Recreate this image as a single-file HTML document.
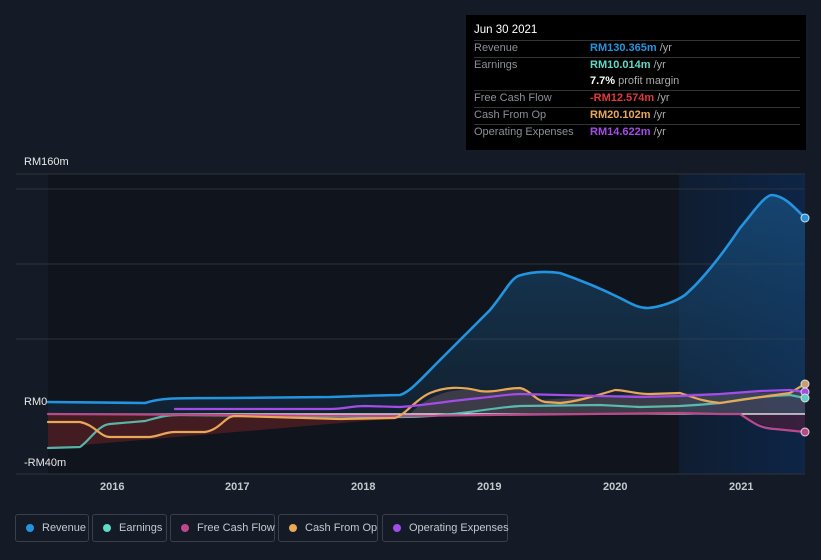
<!DOCTYPE html>
<html><head><style>
body{margin:0;background:#151b26;width:821px;height:560px;overflow:hidden;font-family:"Liberation Sans",sans-serif;position:relative}
.tt{position:absolute;left:466px;top:15px;width:340px;height:135px;background:#000;font-size:11px;color:#8a8f98}
.tt .r{position:absolute;left:8px;width:326px;border-top:1px solid #333}
.tt span{position:absolute;white-space:nowrap}
.leg{position:absolute;top:514px;height:28px;border:1px solid #3a3f4a;border-radius:3px;font-size:11px;color:#c5c8cd;box-sizing:border-box;line-height:26px;white-space:nowrap}
.leg i{position:absolute;left:10px;top:9px;width:8px;height:8px;border-radius:50%}
.leg span{position:absolute;left:26px}
.lbl{position:absolute;color:#e8e8e8;font-size:11px}
.yr{position:absolute;top:481px;color:#c5c8cd;font-size:11px;font-weight:bold}
</style></head><body>
<svg width="821" height="560" style="position:absolute;left:0;top:0">
<defs>
<linearGradient id="fut" x1="0" x2="1"><stop offset="0" stop-color="#0f1d30"/><stop offset="1" stop-color="#0e2547"/></linearGradient>
<linearGradient id="rev" x1="0" y1="0" x2="0" y2="1"><stop offset="0" stop-color="#1a5a8e" stop-opacity=".6"/><stop offset="1" stop-color="#1a4a70" stop-opacity=".25"/></linearGradient>
</defs>
<rect x="48" y="174" width="631" height="300" fill="#10141c"/>
<rect x="679" y="174" width="126" height="300" fill="url(#fut)"/>
<g stroke="#2e333d" stroke-width="1">
<line x1="16" y1="174" x2="805" y2="174"/><line x1="16" y1="189" x2="805" y2="189"/>
<line x1="16" y1="264" x2="805" y2="264"/><line x1="16" y1="339" x2="805" y2="339"/>
<line x1="16" y1="474" x2="805" y2="474"/></g>
<path d="M48,402 L145,403 C160,398 170,398 230,398 L330,397 C360,396 390,395 400,395 C410,392 420,380 440,360 C460,340 475,325 490,310 C505,292 510,280 518,276 C530,272 545,271 560,273 C580,280 600,288 620,298 C635,306 640,308 648,308 C660,307 675,302 685,295 C700,282 720,258 740,228 C755,210 765,195 772,195 C785,196 795,208 805,218 L805,414 L48,414 Z" fill="url(#rev)"/>
<path d="M48,414 L400,414 L400,418 L48,448 Z" fill="#6b2226" opacity=".55"/>
<path d="M410,414 C430,393 455,387 480,391 L520,388 L540,400 L600,396 L640,394 L805,392 L805,414 Z" fill="#8a6a70" opacity=".35"/>
<path d="M680,414 L740,414 C760,425 770,428 805,432 L805,414 Z" fill="#4a1e3a" opacity=".7"/>
<line x1="48" y1="414" x2="805" y2="414" stroke="#fff" stroke-width="1.2"/>
<g fill="none" stroke-width="2.2" stroke-linecap="round">
<path d="M48,448 L80,447 C90,440 98,425 110,424 L145,421 C160,417 165,415 180,415 L400,417 C420,417 440,416 470,412 C490,409 505,407 520,406 L600,405 L640,407 L680,406 C700,405 710,404 720,403 C740,400 760,396 790,395 L805,398" stroke="#5fcfc1" opacity=".85"/>
<path d="M48,414 L400,416 L680,413 L720,414 L740,414 C755,424 760,428 775,429 L805,432" stroke="#b84a8a"/>
<path d="M48,422 L80,422 C95,425 100,437 110,437 L150,437 C160,436 165,432 175,432 L205,432 C220,430 225,416 235,416 L340,419 L395,418 C405,415 415,400 430,393 C445,387 460,386 480,391 C495,393 505,388 520,388 C530,390 535,400 545,402 L560,403 C575,402 595,396 615,390 C625,390 635,394 650,394 L680,393 C690,396 700,401 720,403 C740,400 760,397 790,393 L805,384" stroke="#e8a857"/>
<path d="M175,409 L330,409 C345,409 350,406 365,406 L400,407 C420,406 440,402 480,398 C500,396 510,394 520,394 L600,396 L640,397 L680,396 L720,394 L760,391 L790,390 L805,392" stroke="#a44ce8"/>
<path d="M48,402 L145,403 C160,398 170,398 230,398 L330,397 C360,396 390,395 400,395 C410,392 420,380 440,360 C460,340 475,325 490,310 C505,292 510,280 518,276 C530,272 545,271 560,273 C580,280 600,288 620,298 C635,306 640,308 648,308 C660,307 675,302 685,295 C700,282 720,258 740,228 C755,210 765,195 772,195 C785,196 795,208 805,218" stroke="#2394df" stroke-width="2.6"/>
</g>
<g stroke="#ddd" stroke-width="1">
<circle cx="805" cy="218" r="4" fill="#2394df"/><circle cx="805" cy="384" r="4" fill="#c8a070"/>
<circle cx="805" cy="392" r="4" fill="#a44ce8"/><circle cx="805" cy="398" r="4" fill="#5fcfc1"/>
<circle cx="805" cy="432" r="4" fill="#b84a8a"/></g>
</svg>
<div class="lbl" style="left:24px;top:156px">RM160m</div>
<div class="lbl" style="left:24px;top:396px">RM0</div>
<div class="lbl" style="left:24px;top:457px">-RM40m</div>
<div class="yr" style="left:100px">2016</div><div class="yr" style="left:225px">2017</div>
<div class="yr" style="left:351px">2018</div><div class="yr" style="left:477px">2019</div>
<div class="yr" style="left:603px">2020</div><div class="yr" style="left:729px">2021</div>
<div class="tt">
<span style="left:8px;top:9px;color:#fff;font-size:11.5px">Jun 30 2021</span>
<div class="r" style="top:25px"></div>
<span style="left:8px;top:27px">Revenue</span><span style="left:124px;top:27px;color:#2394df;font-weight:bold">RM130.365m <b style="color:#aaa;font-weight:normal">/yr</b></span>
<div class="r" style="top:42px"></div>
<span style="left:8px;top:44px">Earnings</span><span style="left:124px;top:44px;color:#5fd9c8;font-weight:bold">RM10.014m <b style="color:#aaa;font-weight:normal">/yr</b></span>
<span style="left:124px;top:60px;color:#fff;font-weight:bold">7.7% <b style="color:#aaa;font-weight:normal">profit margin</b></span>
<div class="r" style="top:75px"></div>
<span style="left:8px;top:77px">Free Cash Flow</span><span style="left:124px;top:77px;color:#e0393e;font-weight:bold">-RM12.574m <b style="color:#aaa;font-weight:normal">/yr</b></span>
<div class="r" style="top:92px"></div>
<span style="left:8px;top:94px">Cash From Op</span><span style="left:124px;top:94px;color:#e8a857;font-weight:bold">RM20.102m <b style="color:#aaa;font-weight:normal">/yr</b></span>
<div class="r" style="top:109px"></div>
<span style="left:8px;top:111px">Operating Expenses</span><span style="left:124px;top:111px;color:#a44ce8;font-weight:bold">RM14.622m <b style="color:#aaa;font-weight:normal">/yr</b></span>
</div>
<div class="leg" style="left:15px;width:74px"><i style="background:#2394df"></i><span>Revenue</span></div>
<div class="leg" style="left:92px;width:75px"><i style="background:#5fd9c8"></i><span>Earnings</span></div>
<div class="leg" style="left:170px;width:105px"><i style="background:#c0488a"></i><span>Free Cash Flow</span></div>
<div class="leg" style="left:278px;width:100px"><i style="background:#e8a857"></i><span>Cash From Op</span></div>
<div class="leg" style="left:382px;width:126px"><i style="background:#a44ce8"></i><span>Operating Expenses</span></div>
</body></html>
